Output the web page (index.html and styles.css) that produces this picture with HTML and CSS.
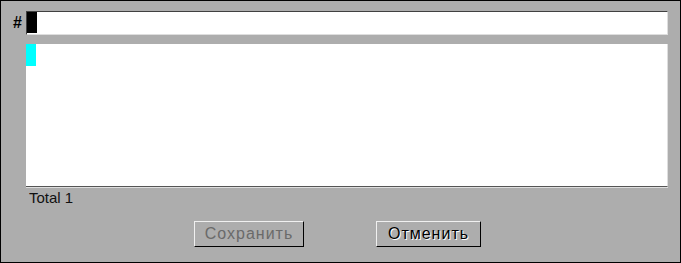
FILE: index.html
```html
<!DOCTYPE html>
<html lang="ru">
<head>
  <meta charset="UTF-8" />
  <title>Запись</title>
  <link rel="stylesheet" href="styles.css">
</head>
<body>
  <div class="frame">
    <div class="field-row">
      <span class="label">#</span>
      <div class="input"><span class="cursor"></span></div>
    </div>
    <div class="memo"><span class="mark"></span></div>
    <div class="total">Total 1</div>
    <div class="buttons">
      <button class="btn btn-disabled" disabled>Сохранить</button>
      <button class="btn">Отменить</button>
    </div>
  </div>
</body>
</html>
```

FILE: styles.css
```css
body {
  margin: 0;
  font-family: "Liberation Sans", Arial, sans-serif;
  background: #adadad;
}
.frame {
  width: 681px;
  height: 263px;
  box-sizing: border-box;
  border: 1px solid #000;
  background: #adadad;
  padding: 10px 12px 0 0;
  display: flex;
  flex-direction: column;
}
.field-row {
  display: flex;
  align-items: stretch;
}
.label {
  width: 25px;
  box-sizing: border-box;
  text-align: right;
  padding-right: 4px;
  font-size: 16px;
  font-weight: bold;
  line-height: 24px;
  color: #000;
}
.input {
  flex: 1;
  height: 24px;
  box-sizing: border-box;
  background: #fff;
  border-top: 1px solid #404040;
  border-left: 1px solid #404040;
  border-right: 1px solid #dedede;
  border-bottom: 1px solid #dedede;
  display: flex;
}
.cursor {
  width: 10px;
  height: 21px;
  background: #000;
}
.memo {
  margin: 9px 0 0 25px;
  height: 143px;
  box-sizing: border-box;
  background: #fff;
  border-bottom: 1px solid #555;
  border-right: 1px solid #dedede;
  box-shadow: 0 1px 0 #dedede;
  display: flex;
}
.mark {
  width: 10px;
  height: 22px;
  background: #00ffff;
}
.total {
  margin: 2px 0 0 28px;
  font-size: 15px;
  line-height: 18px;
  color: #111;
}
.buttons {
  display: flex;
  justify-content: center;
  gap: 72px;
  margin-top: 14px;
  padding-left: 6px;
}
.btn {
  height: 26px;
  box-sizing: border-box;
  padding: 0;
  font-family: "Liberation Sans", Arial, sans-serif;
  font-size: 16px;
  letter-spacing: 1px;
  color: #000;
  background: #adadad;
  border-top: 1px solid #f0f0f0;
  border-left: 1px solid #f0f0f0;
  border-right: 1px solid #000;
  border-bottom: 1px solid #000;
  text-shadow: 1px 1px 0 #fff;
  width: 105px;
}
.btn-disabled {
  width: 110px;
  color: #6a6a6a;
  text-shadow: none;
}
```
